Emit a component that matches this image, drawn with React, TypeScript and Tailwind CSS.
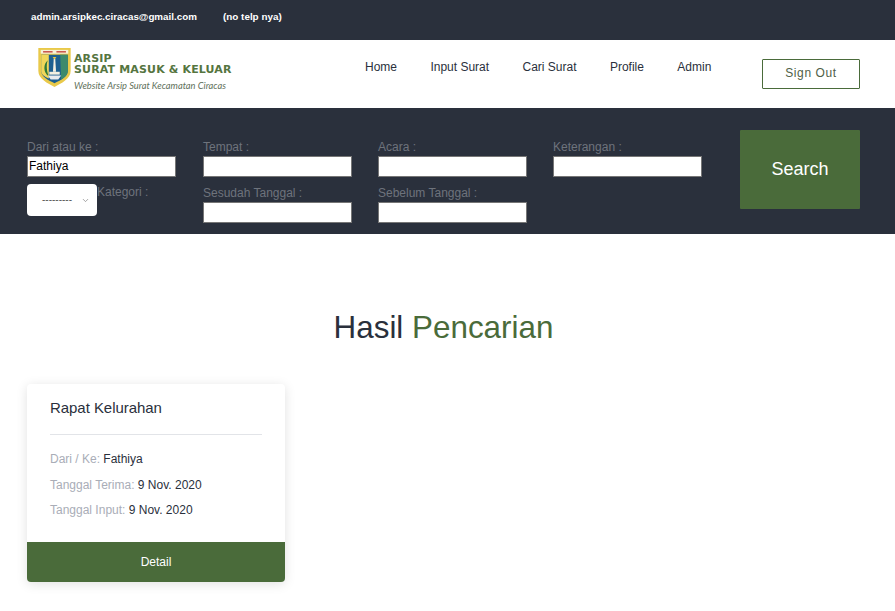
import { ChevronDown } from "lucide-react";

const navLinks = ["Home", "Input Surat", "Cari Surat", "Profile", "Admin"];

function Crest() {
  return (
    <svg width="33" height="39" viewBox="0 0 34 41" className="shrink-0">
      <path d="M0 0H34V24C34 33 24 37 17 41C10 37 0 33 0 24Z" fill="#e9c94a" />
      <rect x="2.5" y="2" width="29" height="4" fill="#f6f0d8" />
      <rect x="5" y="3.2" width="10" height="1.6" fill="#c9544a" />
      <rect x="19" y="3.2" width="10" height="1.6" fill="#c9544a" />
      <path d="M3 7H31V24C31 31 23 34 17 37C11 34 3 31 3 24Z" fill="#1d5f8f" />
      <path d="M3 7H11V32C6 30 3 28 3 24Z" fill="#f0d75a" />
      <path d="M10 13C5 17 5 26 11 30C9 25 8 18 10 13Z" fill="#2f7a3a" />
      <path d="M23 7H31V24C31 28 28 31 24 33Z" fill="#3d8a6c" />
      <path d="M16.2 11H17.8L18.6 25H15.4Z" fill="#f4f1e2" />
      <path d="M15 9.5H19L17 12Z" fill="#eac640" />
      <rect x="11.5" y="25" width="11" height="3" fill="#f4f1e2" />
      <path d="M10 29H24L21 33H13Z" fill="#e9ecef" />
    </svg>
  );
}

function Field({ label, value = "" }: { label: string; value?: string }) {
  return (
    <div className="flex h-[46px] flex-col">
      <label className="h-[18px] pt-px text-[12px] leading-[17px] text-[#6e737c]">{label}</label>
      <input
        readOnly
        value={value}
        className="h-[21px] w-[149px] border border-[#767676] bg-white px-px pb-[2px] text-[12px] text-black"
      />
    </div>
  );
}

export default function App() {
  return (
    <div className="min-h-[611px] bg-white font-['Liberation_Sans',Arial,sans-serif]">
      <div className="flex h-10 items-center gap-[26px] bg-[#2a303c] pb-[6px] pl-[31px] text-[9.9px] font-bold text-white">
        <span className="w-[166px] whitespace-nowrap text-[9.8px]">admin.arsipkec.ciracas@gmail.com</span>
        <span>(no telp nya)</span>
      </div>

      <header className="flex h-[68px] bg-white">
        <div className="flex w-[365px] shrink-0 items-start gap-[3px] pl-[38px] pt-[8px]">
          <Crest />
          <div className="pt-[5px] text-[#55753f]">
            <div className="font-['DejaVu_Sans',sans-serif] text-[11px] leading-[11px] font-bold tracking-[0.1px]">
              ARSIP
            </div>
            <div className="font-['DejaVu_Sans',sans-serif] text-[11px] leading-[12px] font-bold tracking-[0.15px] whitespace-nowrap">
              SURAT MASUK &amp; KELUAR
            </div>
            <div className="mt-[4px] font-['Lato',sans-serif] text-[9.3px] leading-[11px] whitespace-nowrap text-[#60705a] italic">
              Website Arsip Surat Kecamatan Ciracas
            </div>
          </div>
        </div>
        <nav className="flex h-[54px] items-center gap-[33.4px] text-[12px] text-[#2a303c]">
          {navLinks.map((link) => (
            <a key={link} href="#">
              {link}
            </a>
          ))}
        </nav>
        <div className="ml-auto pt-[19px] pr-[35px]">
          <button className="h-[30px] w-[98px] rounded-[1px] border border-[#4a6b3a] bg-white pb-[2px] text-[12px] tracking-[0.6px] text-[#4f5f47]">
            Sign Out
          </button>
        </div>
      </header>

      <section className="flex h-[126px] bg-[#2a303c] pl-[27px]">
        <div className="mt-[30px] grid h-[92px] w-[713px] grid-cols-[176px_175px_175px_187px]">
          <Field label="Dari atau ke :" value="Fathiya" />
          <Field label="Tempat :" />
          <Field label="Acara :" />
          <Field label="Keterangan :" />
          <div className="flex items-start">
            <div className="flex h-[32px] w-[70px] items-center rounded-[4px] bg-white pl-[15px] text-[10px] text-[#555]">
              <span className="leading-none">---------</span>
              <ChevronDown size={9} className="ml-[9px] text-[#888]" />
            </div>
            <span className="text-[12px] leading-[17px] text-[#6e737c]">Kategori :</span>
          </div>
          <Field label="Sesudah Tanggal :" />
          <Field label="Sebelum Tanggal :" />
        </div>
        <div className="pt-[22px]">
          <button className="h-[79px] w-[120px] rounded-[1px] bg-[#4a6b3a] text-[18px] text-white">
            Search
          </button>
        </div>
      </section>

      <main className="px-[27px]">
        <h1 className="mt-[74px] pr-[8px] text-center text-[31.4px] leading-[40px] text-[#2a303c]">
          Hasil <span className="text-[#4a6b3a]">Pencarian</span>
        </h1>
        <article className="mt-[36px] w-[258px] rounded-[4px] bg-white shadow-[0_2px_12px_rgba(0,0,0,0.12)]">
          <div className="px-[23px] pt-[15px]">
            <h2 className="text-[15px] leading-[18px] tracking-[-0.05px] text-[#2a303c]">Rapat Kelurahan</h2>
            <hr className="mt-[17px] border-[#e2e4e8]" />
            <div className="pt-[16px] pb-[24px] text-[12px] leading-[16px] text-[#2a303c]">
              <p>
                <span className="text-[#a9adb7]">Dari / Ke:</span> Fathiya
              </p>
              <p className="mt-[10px]">
                <span className="text-[#a9adb7]">Tanggal Terima:</span> 9 Nov. 2020
              </p>
              <p className="mt-[9px]">
                <span className="text-[#a9adb7]">Tanggal Input:</span> 9 Nov. 2020
              </p>
            </div>
          </div>
          <button className="h-10 w-full rounded-b-[4px] bg-[#4a6b3a] text-[12px] text-white">Detail</button>
        </article>
      </main>
    </div>
  );
}
